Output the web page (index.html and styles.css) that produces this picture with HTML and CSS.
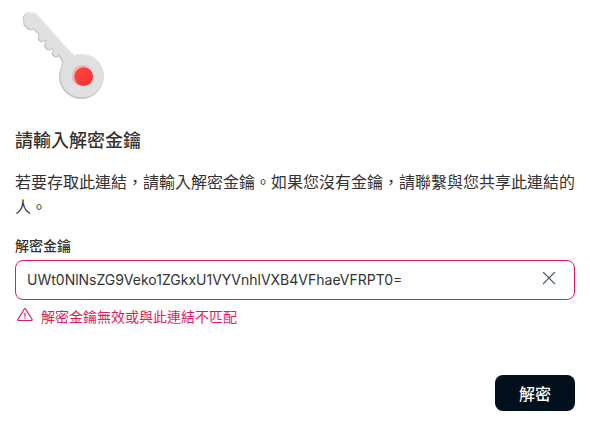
FILE: index.html
```html
<!DOCTYPE html>
<html lang="zh-Hant">
  <head>
    <meta charset="UTF-8" />
    <meta name="viewport" content="width=device-width, initial-scale=1" />
    <title>請輸入解密金鑰</title>
    <link rel="stylesheet" href="styles.css">
  </head>
  <body>
    <main class="key-dialog">
      <svg class="key-art" viewBox="15 24 288 288" aria-hidden="true">
        <defs>
          <linearGradient id="gem" x1="0" y1="0" x2="1" y2="1">
            <stop offset="0" stop-color="#ff463f" />
            <stop offset="1" stop-color="#f13038" />
          </linearGradient>
        </defs>
        <g fill="#c6c6c6" stroke="#c6c6c6" stroke-width="4" stroke-linejoin="round">
          <path d="M49 40 L40 51 L43 76 L56 89 L66 88 L71 86 L89 105 L85 111 L86 119 L93 125 L101 124 L106 120 L109 124 L104 132 L105 142 L112 149 L120 149 L123 145 L131 151 L127 158 L129 166 L136 171 L144 169 L148 167 L159 187 L155 201 L190 220 V166 Z" />
          <circle cx="214" cy="230" r="65" />
        </g>
        <g fill="#e0e0e0" stroke="#e0e0e0" stroke-width="4" stroke-linejoin="round">
          <path d="M51 39 L43 51 L46 73 L58 85 L67 84 L71 80 L93 103 L89 109 L90 116 L95 121 L102 120 L107 115 L113 121 L108 131 L109 139 L115 145 L121 144 L125 140 L135 149 L131 157 L133 163 L138 167 L144 164 L149 160 L163 184 L159 200 L190 220 V168 L80 44 L76 40 Z" />
          <circle cx="216" cy="227" r="63" />
        </g>
        <path fill="none" stroke="#ebebeb" stroke-width="3" d="M52 40 L77 41 L189 166 Q212 159 239 168" />
        <circle cx="217" cy="226" r="31" fill="#f5b3ac" />
        <path fill="none" stroke="#ee94cf" stroke-width="3" d="M187 234 A31 31 0 0 0 207 255" />
        <path fill="none" stroke="#ffad55" stroke-width="3" d="M190 241 A31 31 0 0 0 204 254 M241 251 A31 31 0 0 0 249 229" />
        <circle cx="221" cy="230" r="28" fill="url(#gem)" />
      </svg>

      <h1 class="title">請輸入解密金鑰</h1>
      <p class="description">若要存取此連結，請輸入解密金鑰。如果您沒有金鑰，請聯繫與您共享此連結的人。</p>

      <form class="key-form">
        <label class="field-label" for="decryptionKey">解密金鑰</label>
        <div class="field">
          <input
            class="field-input"
            type="text"
            id="decryptionKey"
            name="decryptionKey"
            value="UWt0NlNsZG9Veko1ZGkxU1VYVnhlVXB4VFhaeVFRPT0="
            autocomplete="off"
            spellcheck="false"
            aria-invalid="true"
            aria-describedby="keyError"
          />
          <button class="clear-button" type="button" aria-label="清除">
            <svg class="icon" viewBox="0 0 16 16" aria-hidden="true">
              <path d="M2.4 2.4 L13.6 13.6 M13.6 2.4 L2.4 13.6" />
            </svg>
          </button>
        </div>
        <div class="error" id="keyError">
          <svg class="icon" viewBox="0 0 16 16" aria-hidden="true">
            <path d="M7.2 2.2 Q8 1 8.8 2.2 L15 12.3 Q15.6 13.5 14.3 13.5 H1.7 Q0.4 13.5 1 12.3 Z M8 6 V9.3 M8 10.9 V11.3" />
          </svg>
          <span>解密金鑰無效或與此連結不匹配</span>
        </div>
        <button class="submit-button" type="submit">解密</button>
      </form>
    </main>
  </body>
</html>
```

FILE: styles.css
```css
* {
  box-sizing: border-box;
}

body {
  margin: 0;
  background: #fff;
  color: #333;
  font-family: Inter, "Noto Sans CJK TC", sans-serif;
}

.key-dialog {
  padding: 8px 15px 32px;
}

.key-art {
  display: block;
  width: 96px;
  height: 96px;
}

.title {
  margin: 24px 0 16px;
  font-size: 18px;
  line-height: 26px;
  font-weight: 500;
}

.description {
  margin: 0 0 16px;
  font-size: 16px;
  line-height: 25px;
}

.key-form {
  display: flex;
  flex-direction: column;
}

.field-label {
  margin-bottom: 4px;
  font-size: 14px;
  line-height: 20px;
  font-weight: 500;
}

.field {
  display: flex;
  align-items: center;
  height: 40px;
  padding: 0 17px 0 11px;
  border: 1px solid #e01e5a;
  border-radius: 8px;
}

.field-input {
  flex: 1;
  min-width: 0;
  padding: 0;
  border: 0;
  outline: 0;
  background: transparent;
  color: #333;
  font-family: inherit;
  font-size: 14px;
  line-height: 20px;
}

.clear-button {
  display: flex;
  padding: 0;
  margin-bottom: 4px;
  border: 0;
  background: transparent;
  color: #445060;
  cursor: pointer;
}

.icon {
  width: 16px;
  height: 16px;
  fill: none;
  stroke: currentColor;
  stroke-width: 1.2;
  stroke-linecap: round;
  stroke-linejoin: round;
}

.error {
  display: flex;
  gap: 8px;
  margin: 7px 0 48px;
  padding-left: 2px;
  color: #e01e5a;
  font-size: 14px;
  line-height: 20px;
}

.submit-button {
  align-self: flex-end;
  height: 36px;
  padding: 0 24px;
  border: 0;
  border-radius: 8px;
  background: #020f1c;
  color: #fff;
  font-family: inherit;
  font-size: 16px;
  font-weight: 500;
  cursor: pointer;
}
```
